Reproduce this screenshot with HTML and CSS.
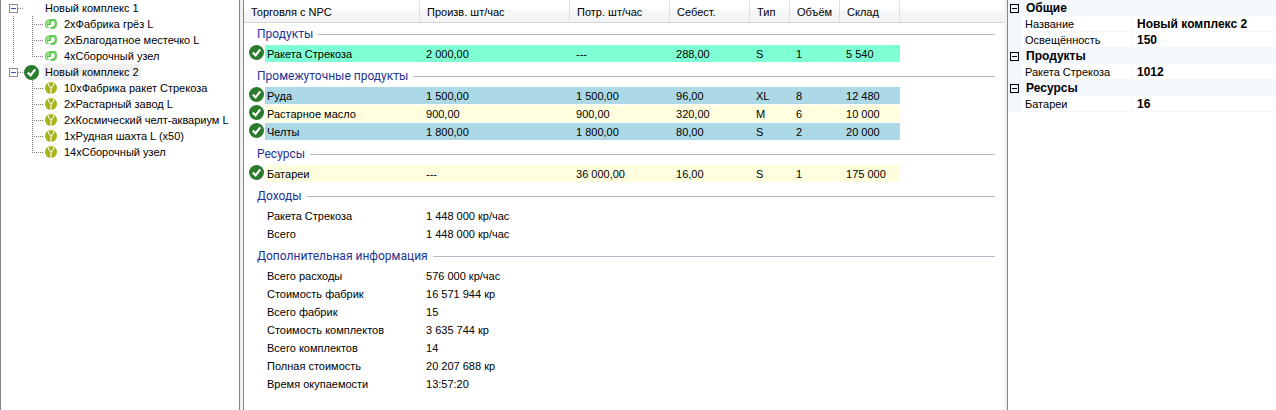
FILE: index.html
```html
<!DOCTYPE html>
<html lang="ru">
<head>
    <meta charset="UTF-8">
    <meta name="viewport" content="width=device-width, initial-scale=1.0">
    <title>Торговля с NPC</title>
    <link rel="stylesheet" href="styles.css">
</head>
<body>
    <svg class="sprites" aria-hidden="true">
        <symbol id="ok" viewBox="0 0 15 15">
            <circle cx="7.5" cy="7.5" r="7.5" fill="#2a7b2c"/>
            <path d="M3.8 7.6 L6.6 10.4 L11.2 4.4" fill="none" stroke="#fff" stroke-width="2.2"/>
        </symbol>
        <symbol id="argon" viewBox="0 0 12 12">
            <path d="M3.6 9.4 C-0.4 8.4 0 3 4.6 2.2" fill="none" stroke="#8ad97c" stroke-width="2.4"/>
            <path d="M1.8 6.2 H6" fill="none" stroke="#4fbf45" stroke-width="1.6"/>
            <path d="M5 5.4 V3.6 Q5 2.2 6.4 2.2 H8.6 Q10.8 2.2 10.8 4.4 V6.6 Q10.8 9.6 7.8 9.8 H5.6" fill="none" stroke="#5fca52" stroke-width="2.2"/>
        </symbol>
        <symbol id="boron" viewBox="0 0 12 12">
            <circle cx="6" cy="6" r="6" fill="#a9b41c"/>
            <path d="M3.2 1.2 C3.4 4 4.6 5.2 6 6 C7.4 5.2 8.6 4 8.8 1.2 M6 5.8 V12" fill="none" stroke="#fff" stroke-width="1.1"/>
        </symbol>
    </svg>

    <div class="app">
        <nav class="tree">
            <ul class="roots">
                <li>
                    <div class="node root"><button class="toggle" aria-label="Свернуть"></button><span class="status"></span><span class="caption">Новый комплекс 1</span></div>
                    <ul class="children">
                        <li class="node"><svg class="race"><use href="#argon"/></svg>2xФабрика грёз L</li>
                        <li class="node"><svg class="race"><use href="#argon"/></svg>2xБлагодатное местечко L</li>
                        <li class="node"><svg class="race"><use href="#argon"/></svg>4xСборочный узел</li>
                    </ul>
                </li>
                <li>
                    <div class="node root"><button class="toggle" aria-label="Свернуть"></button><span class="status"><svg class="ok"><use href="#ok"/></svg></span><span class="caption selected">Новый комплекс 2</span></div>
                    <ul class="children">
                        <li class="node"><svg class="race"><use href="#boron"/></svg>10xФабрика ракет Стрекоза</li>
                        <li class="node"><svg class="race"><use href="#boron"/></svg>2xРастарный завод L</li>
                        <li class="node"><svg class="race"><use href="#boron"/></svg>2xКосмический челт-аквариум L</li>
                        <li class="node"><svg class="race"><use href="#boron"/></svg>1xРудная шахта L (x50)</li>
                        <li class="node"><svg class="race"><use href="#boron"/></svg>14xСборочный узел</li>
                    </ul>
                </li>
            </ul>
        </nav>

        <main class="trade">
            <table>
                <colgroup>
                    <col class="c-icon"><col class="c-name"><col class="c-prod"><col class="c-cons"><col class="c-cost"><col class="c-type"><col class="c-vol"><col class="c-store"><col>
                </colgroup>
                <thead>
                    <tr>
                        <th colspan="2">Торговля с NPC</th>
                        <th>Произв. шт/час</th>
                        <th>Потр. шт/час</th>
                        <th>Себест.</th>
                        <th>Тип</th>
                        <th>Объём</th>
                        <th>Склад</th>
                        <th></th>
                    </tr>
                </thead>
                <tbody>
                    <tr class="group first"><th colspan="9"><div>Продукты</div></th></tr>
                    <tr class="product"><td><svg class="ok"><use href="#ok"/></svg></td><td>Ракета Стрекоза</td><td>2 000,00</td><td>---</td><td>288,00</td><td>S</td><td>1</td><td>5 540</td><td></td></tr>
                </tbody>
                <tbody>
                    <tr class="group"><th colspan="9"><div>Промежуточные продукты</div></th></tr>
                    <tr class="balanced"><td><svg class="ok"><use href="#ok"/></svg></td><td>Руда</td><td>1 500,00</td><td>1 500,00</td><td>96,00</td><td>XL</td><td>8</td><td>12 480</td><td></td></tr>
                    <tr class="resource"><td><svg class="ok"><use href="#ok"/></svg></td><td>Растарное масло</td><td>900,00</td><td>900,00</td><td>320,00</td><td>M</td><td>6</td><td>10 000</td><td></td></tr>
                    <tr class="balanced"><td><svg class="ok"><use href="#ok"/></svg></td><td>Челты</td><td>1 800,00</td><td>1 800,00</td><td>80,00</td><td>S</td><td>2</td><td>20 000</td><td></td></tr>
                </tbody>
                <tbody>
                    <tr class="group"><th colspan="9"><div>Ресурсы</div></th></tr>
                    <tr class="resource"><td><svg class="ok"><use href="#ok"/></svg></td><td>Батареи</td><td>---</td><td>36 000,00</td><td>16,00</td><td>S</td><td>1</td><td>175 000</td><td></td></tr>
                </tbody>
                <tbody>
                    <tr class="group"><th colspan="9"><div>Доходы</div></th></tr>
                    <tr><td></td><td>Ракета Стрекоза</td><td colspan="7">1 448 000 кр/час</td></tr>
                    <tr><td></td><td>Всего</td><td colspan="7">1 448 000 кр/час</td></tr>
                </tbody>
                <tbody>
                    <tr class="group"><th colspan="9"><div>Дополнительная информация</div></th></tr>
                    <tr><td></td><td>Всего расходы</td><td colspan="7">576 000 кр/час</td></tr>
                    <tr><td></td><td>Стоимость фабрик</td><td colspan="7">16 571 944 кр</td></tr>
                    <tr><td></td><td>Всего фабрик</td><td colspan="7">15</td></tr>
                    <tr><td></td><td>Стоимость комплектов</td><td colspan="7">3 635 744 кр</td></tr>
                    <tr><td></td><td>Всего комплектов</td><td colspan="7">14</td></tr>
                    <tr><td></td><td>Полная стоимость</td><td colspan="7">20 207 688 кр</td></tr>
                    <tr><td></td><td>Время окупаемости</td><td colspan="7">13:57:20</td></tr>
                </tbody>
            </table>
        </main>

        <aside class="props">
            <h2><button class="toggle" aria-label="Свернуть"></button>Общие</h2>
            <dl>
                <dt>Название</dt><dd>Новый комплекс 2</dd>
                <dt>Освещённость</dt><dd>150</dd>
            </dl>
            <h2><button class="toggle" aria-label="Свернуть"></button>Продукты</h2>
            <dl>
                <dt>Ракета Стрекоза</dt><dd>1012</dd>
            </dl>
            <h2><button class="toggle" aria-label="Свернуть"></button>Ресурсы</h2>
            <dl>
                <dt>Батареи</dt><dd>16</dd>
            </dl>
        </aside>
    </div>
</body>
</html>
```
FILE: styles.css
```css
* {
    box-sizing: border-box;
}
body {
    margin: 0;
    font-family: "Liberation Sans", Arial, sans-serif;
    font-size: 11px;
    line-height: 16px;
    color: #000;
    background-color: #f0f0f0;
    white-space: nowrap;
}
ul, dl, dd, h2 {
    margin: 0;
    padding: 0;
    list-style: none;
}
svg {
    display: block;
}
.sprites {
    display: none;
}
.app {
    display: grid;
    grid-template-columns: 240px 1fr 269px;
    min-height: 100vh;
}
.ok {
    width: 15px;
    height: 15px;
}

/* tree */
.tree {
    border-left: 1px solid #828790;
    border-right: 1px solid #828790;
    padding-left: 8px;
    background-color: #fff;
}
.node {
    display: flex;
    align-items: center;
    height: 16px;
}
.toggle {
    flex: none;
    width: 9px;
    height: 9px;
    padding: 0;
    border: 1px solid #919191;
    background: linear-gradient(#3c50a0, #3c50a0) center / 5px 1px no-repeat #fff;
}
.root::before {
    content: "";
    order: 1;
    width: 5px;
    border-top: 1px dotted #808080;
}
.root .status {
    order: 2;
    width: 15px;
    margin-left: 1px;
}
.root .caption {
    order: 3;
    margin-left: 4px;
    padding: 0 2px;
}
.selected {
    background-color: #f0f0f0;
}
.children {
    margin-left: 23px;
    background: repeating-linear-gradient(#808080 0 1px, transparent 1px 2px) left top / 1px calc(100% - 8px) no-repeat;
}
.roots > li:first-child > .children {
    margin-left: 4px;
    padding-left: 19px;
    background: repeating-linear-gradient(#808080 0 1px, transparent 1px 2px) left top / 1px 100% no-repeat,
        repeating-linear-gradient(#808080 0 1px, transparent 1px 2px) 19px top / 1px calc(100% - 8px) no-repeat;
}
.children .node::before {
    content: "";
    width: 11px;
    border-top: 1px dotted #808080;
}
.race {
    width: 12px;
    height: 12px;
    margin: 0 7px 0 2px;
}

/* trade list */
.trade {
    margin: 0 2px 0 3px;
    border-left: 1px solid #828790;
    background-color: #fff;
}
table {
    width: 100%;
    table-layout: fixed;
    border-collapse: separate;
    border-spacing: 0;
}
.c-icon { width: 21px; }
.c-name { width: 155px; }
.c-prod { width: 150px; }
.c-cons { width: 100px; }
.c-cost { width: 80px; }
.c-type { width: 40px; }
.c-vol { width: 50px; }
.c-store { width: 60px; }
thead th {
    height: 23px;
    padding: 2px 7px 0;
    font-weight: normal;
    text-align: left;
    background: linear-gradient(#fff 40%, #f7f8fa 45%, #f1f2f4);
    border-right: 1px solid #dfe0e1;
    border-bottom: 1px solid #d5d5d5;
}
thead th:last-child {
    border-right: 0;
}
.group th {
    height: 24px;
    padding: 0 10px 0 13px;
    vertical-align: bottom;
    font-family: Roboto, "Open Sans", sans-serif;
    font-size: 12px;
    font-weight: normal;
    color: #1e3296;
}
.group.first th {
    height: 22px;
}
.group div {
    display: flex;
    align-items: center;
    gap: 5px;
    height: 22px;
}
.group div::after {
    content: "";
    flex: 1;
    border-top: 1px solid #b0bccc;
}
td {
    height: 18px;
    padding: 1px 6px 0;
    line-height: 16px;
    border-bottom: 1px solid #fff;
}
td:first-child {
    padding: 0 5px;
    vertical-align: top;
}
td:nth-child(2) {
    padding: 1px 2px 0;
}
.product td:not(:first-child, :last-child) {
    background-color: #7fffd4;
}
.balanced td:not(:first-child, :last-child) {
    background-color: #add8e6;
}
.resource td:not(:first-child, :last-child) {
    background-color: #ffffe0;
}

/* property grid */
.props {
    border-left: 1px solid #828790;
    background-color: #fff;
}
.props h2 {
    display: flex;
    align-items: center;
    gap: 7px;
    height: 16px;
    padding-left: 2px;
    font-size: 12px;
    background-color: #f4f7fc;
}
.props .toggle {
    border-color: #000;
    background: linear-gradient(#000, #000) center / 5px 1px no-repeat;
}
.props dl {
    display: grid;
    grid-template-columns: 111px 1fr;
    border-left: 13px solid #f4f7fc;
}
.props dt, .props dd {
    height: 16px;
    padding-left: 4px;
    border-bottom: 1px solid #f4f7fc;
}
.props dd {
    border-left: 1px solid #f4f7fc;
    font-size: 12px;
    font-weight: bold;
}
```
